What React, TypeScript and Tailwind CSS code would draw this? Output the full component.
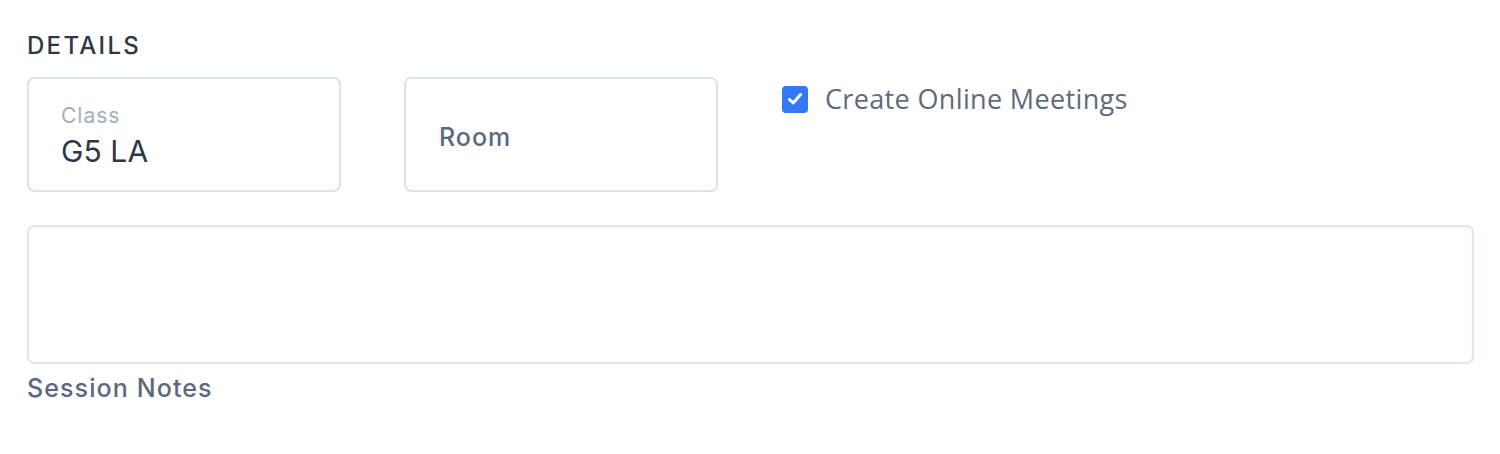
import { useState } from 'react';

export default function App() {
    const [online, setOnline] = useState<boolean>(true);
    const [notes, setNotes] = useState<string>('');

    return (
        <div className="w-[1500px] h-[454px] bg-white font-['Inter',sans-serif]">
            <div className="pl-[27px] pr-[26px] pt-[34px]">
                <h2 className="text-[24px] leading-[24px] font-medium tracking-[2.3px] text-[#2d3748]">DETAILS</h2>
                <div className="flex items-start mt-[19px]">
                    {/* class field */}
                    <div className="w-[314px] h-[115px] border-2 border-[#dbe3ee] rounded-[7px] pl-[32px] pt-[24px]">
                        <div className="text-[21px] leading-[25px] tracking-[1px] text-[#a0aec0]">Class</div>
                        <div className="text-[30px] leading-[34px] mt-[6px] tracking-[0.1px] text-[#2d3748]">G5 LA</div>
                    </div>
                    <div className="w-[314px] h-[115px] ml-[63px] border-2 border-[#dbe3ee] rounded-[7px] pl-[33px] flex items-center">
                        <span className="text-[25px] font-medium tracking-[1px] text-[#5b6880] pt-[6px]">Room</span>
                    </div>
                    <label className="ml-[64px] mt-[5px] flex items-center gap-[17px] cursor-pointer">
                        <button
                            type="button"
                            onClick={() => setOnline(!online)}
                            className={online ? 'w-[26px] h-[27px] rounded-[4px] bg-[#3478f6] flex items-center justify-center' : 'w-[26px] h-[27px] rounded-[4px] border-2 border-[#cbd5e1] bg-white'}
                        >
                            {online && (
                                <svg width="18" height="18" viewBox="0 0 18 18" fill="none">
                                    <path d="M3.5 9.5 L7.2 13 L14.5 4.5" stroke="white" strokeWidth="3" strokeLinecap="round" strokeLinejoin="round" />
                                </svg>
                            )}
                        </button>
                        <span className="font-['Open_Sans',sans-serif] text-[27px] leading-[34px] tracking-[0.35px] text-[#5f6b7d]">Create Online Meetings</span>
                    </label>
                </div>
                {/* notes */}
                <textarea
                    value={notes}
                    onChange={(e) => setNotes(e.target.value)}
                    className="block mt-[33px] w-full h-[139px] border-2 border-[#e0e6f0] rounded-[7px] shadow-[inset_0_1px_3px_rgba(0,0,0,0.05)] resize-none outline-none p-3"
                />
                <div className="mt-[9px] text-[25px] leading-[30px] font-medium tracking-[1.1px] text-[#5b6880]">Session Notes</div>
            </div>
        </div>
    );
}
